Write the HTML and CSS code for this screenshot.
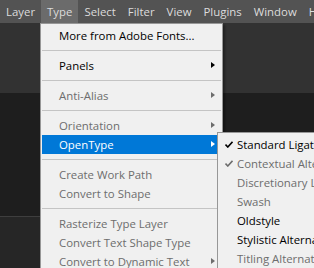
FILE: index.html
```html
<!DOCTYPE html>
<html>
<head>
<meta charset="utf-8">
<link rel="stylesheet" href="styles.css">
</head>
<body>
<div class="app">
  <div class="menubar">
    <span class="mb-item">Layer</span>
    <span class="mb-item active">Type</span>
    <span class="mb-item">Select</span>
    <span class="mb-item">Filter</span>
    <span class="mb-item">View</span>
    <span class="mb-item">Plugins</span>
    <span class="mb-item">Window</span>
    <span class="mb-item">Help</span>
  </div>
  <div class="options"></div>
  <div class="docarea">
    <div class="doc-top"></div>
    <div class="doc-line"></div>
    <div class="doc-bottom"></div>
  </div>

  <div class="menu main-menu">
    <div class="item">More from Adobe Fonts...</div>
    <div class="sep"></div>
    <div class="item sub">Panels<span class="arrow"></span></div>
    <div class="sep"></div>
    <div class="item sub disabled">Anti-Alias<span class="arrow"></span></div>
    <div class="sep"></div>
    <div class="item sub disabled">Orientation<span class="arrow"></span></div>
    <div class="item sub hover">OpenType<span class="arrow"></span></div>
    <div class="sep"></div>
    <div class="item disabled">Create Work Path</div>
    <div class="item disabled">Convert to Shape</div>
    <div class="sep"></div>
    <div class="item disabled">Rasterize Type Layer</div>
    <div class="item disabled">Convert Text Shape Type</div>
    <div class="item sub disabled">Convert to Dynamic Text<span class="arrow"></span></div>
  </div>

  <div class="menu sub-menu">
    <div class="item checked"><svg class="check" width="8" height="7" viewBox="0 0 8 7"><path d="M0.5 3.6 L2.8 6 L7.5 0.8" fill="none" stroke="currentColor" stroke-width="1.6"/></svg>Standard Ligatures</div>
    <div class="item checked disabled"><svg class="check" width="8" height="7" viewBox="0 0 8 7"><path d="M0.5 3.6 L2.8 6 L7.5 0.8" fill="none" stroke="currentColor" stroke-width="1.6"/></svg>Contextual Alternates</div>
    <div class="item disabled">Discretionary Ligatures</div>
    <div class="item disabled">Swash</div>
    <div class="item">Oldstyle</div>
    <div class="item">Stylistic Alternates</div>
    <div class="item disabled">Titling Alternates</div>
  </div>
</div>
</body>
</html>
```
FILE: styles.css
```css
html, body {
  margin: 0;
  padding: 0;
}
body {
  width: 314px;
  height: 268px;
  overflow: hidden;
  background: #1e1e1e;
  font-family: "Open Sans", "Noto Sans", sans-serif;
  font-size: 11.4px;
}
.app {
  position: relative;
  width: 314px;
  height: 268px;
  overflow: hidden;
  display: flex;
  flex-direction: column;
}
.menubar {
  height: 23px;
  background: #535353;
  display: flex;
  white-space: nowrap;
  flex: none;
}
.mb-item {
  padding: 0 6px;
  line-height: 23px;
  color: #dcdcdc;
}
.mb-item.active {
  background: #6b6b6b;
}
.options {
  height: 70px;
  background: #323232;
  flex: none;
}
.docarea {
  flex: 1;
  display: flex;
  flex-direction: column;
}
.doc-top {
  height: 123px;
  background: #1e1e1e;
}
.doc-line {
  height: 1px;
  background: #3e3e3e;
}
.doc-bottom {
  flex: 1;
  background: #262626;
}
.menu {
  position: absolute;
  background: #f0f0f0;
  border: 1px solid #979797;
  box-shadow: 2px 2px 2px rgba(0, 0, 0, 0.35);
  color: #000;
  white-space: nowrap;
}
.main-menu {
  left: 40px;
  top: 23px;
  width: 179px;
  padding: 2px 1px;
}
.sub-menu {
  left: 217px;
  top: 132px;
  width: 180px;
  padding: 2px 1px;
}
.item {
  position: relative;
  height: 19px;
  line-height: 19px;
  padding-left: 17px;
}
.sub-menu .item {
  padding-left: 18px;
}
.item.disabled {
  color: #6d6d6d;
}
.item.hover {
  background: #0078d7;
  color: #fff;
}
.sep {
  height: 1px;
  background: #c4c4c4;
  margin: 5px 0;
}
.arrow {
  position: absolute;
  right: 6px;
  top: 6px;
  width: 0;
  height: 0;
  border-top: 3.5px solid transparent;
  border-bottom: 3.5px solid transparent;
  border-left: 4px solid currentColor;
}
.item.disabled .arrow {
  border-left-color: #6d6d6d;
}
.item.hover .arrow {
  border-left-color: #fff;
}
.check {
  position: absolute;
  left: 6px;
  top: 6px;
}
```
